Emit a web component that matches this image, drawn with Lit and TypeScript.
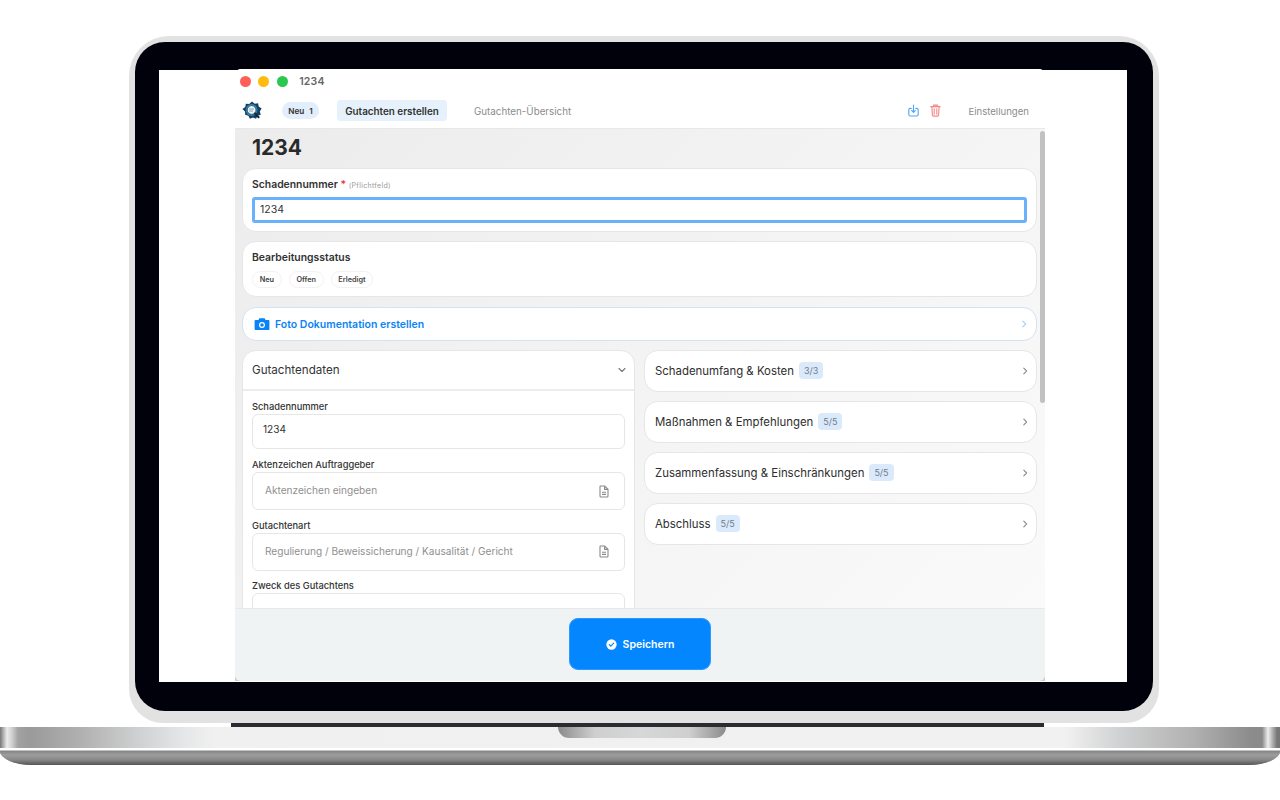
import { LitElement, html, css, svg } from "lit";
import { customElement } from "lit/decorators.js";

const docIcon = html`<svg class="doc" viewBox="0 0 12 13" width="12" height="13" fill="none" stroke="#8a8a8a" stroke-width="1.1"><path d="M2.5 1h4.2L10 4.3V11a1 1 0 0 1-1 1H3a1 1 0 0 1-1-1V1.6a.6.6 0 0 1 .5-.6z"/><path d="M6.6 1.2V4.4H9.8M4 7.3h4M4 9.4h4"/></svg>`;
const chev = html`<svg class="chev" viewBox="0 0 8 10" width="8" height="10" fill="none" stroke="#8a8a8a" stroke-width="1.1" stroke-linecap="round" stroke-linejoin="round"><path d="M2.8 2.2l2.8 2.8-2.8 2.8"/></svg>`;

@customElement("app-root")
export class AppRoot extends LitElement {
  static styles = css`
    :host { display: block; width: 1280px; height: 800px; overflow: hidden; background: #fff; font-family: Inter, "Liberation Sans", sans-serif; color: #2b2b2b; }
    * { box-sizing: border-box; }
    .device { width: 1030px; height: 687px; margin: 36px 0 0 129px; padding: 6px 6px 12px; background: #e2e2e2; border-radius: 40px 40px 34px 34px; }
    .bezel { height: 669px; background: #00010a; border-radius: 30px; padding: 28px 26px 29px 24px; }
    .screen { height: 612px; background: #fff; padding: 0 82px 0 76px; display: flex; flex-direction: column; }
    .win { height: 612px; flex: none; margin-top: -1px; background: linear-gradient(#fff 90%, #cfcfcf 90%); border-radius: 6px 6px 0 0; display: flex; flex-direction: column; overflow: hidden; position: relative; }
    .titlebar { height: 24px; flex: none; display: flex; align-items: center; padding-left: 5px; background: #fff; }
    .dot { width: 11px; height: 11px; border-radius: 50%; margin-right: 7.4px; }
    .wintitle { margin-left: 4px; font-size: 10.5px; font-weight: 600; color: #666; letter-spacing: .2px; }
    .nav { height: 36px; flex: none; display: flex; align-items: center; border-bottom: 1px solid #e8e8e8; padding-left: 7px; background: #fff; }
    .logo { width: 20px; height: 20px; margin-right: 20px; }
    .neu { height: 17px; width: 37px; border-radius: 9px; background: #e2eefb; font-size: 8.2px; font-weight: 600; color: #333; display: flex; align-items: center; justify-content: center; gap: 5px; margin-right: 18px; }
    .tab { height: 21px; width: 110px; background: #e6f1fb; border-radius: 4px; font-size: 9.9px; font-weight: 600; color: #333; display: flex; align-items: center; justify-content: center; margin-right: 27px; }
    .link { font-size: 9.8px; color: #8b8b8b; padding-top: 1px; }
    .actions { margin-left: auto; display: flex; align-items: center; }
    .actions svg { display: block; }
    .settings { font-size: 9.6px; color: #8b8b8b; margin: 0 16px 0 27px; padding-top: 1px; }
    .trash { margin-left: 11px; }
    .content { flex: 1; min-height: 0; overflow: hidden; position: relative; padding: 0 8px 0 7px; background: linear-gradient(135deg, #ececec 0%, #f2f2f2 40%, #fafafa 100%); }
    .thumb { position: absolute; right: 0; top: 2px; width: 5px; height: 272px; background: #c1c1c1; border-radius: 3px; }
    h1 { margin: 0; font-size: 21px; line-height: 25px; height: 39px; padding: 6px 0 0 10px; font-weight: 700; color: #2a2a2a; }
    .card { background: #fff; border: 1px solid #e6e6e6; border-radius: 14px; }
    .c1 { height: 64px; padding: 10px 9px; margin-bottom: 9px; }
    .req { font-size: 10.4px; font-weight: 600; color: #333; line-height: 12px; display: block; }
    .req i { color: #f0323c; font-style: normal; }
    .req small { font-size: 7px; font-weight: 400; color: #999; letter-spacing: .3px; }
    .focus { height: 26px; margin-top: 5px; border: 3px solid #6ab1fb; border-radius: 3px; font-size: 10.5px; color: #333; display: flex; align-items: center; padding: 0 0 2px 5px; }
    .c2 { height: 56px; padding: 9px 9px; margin-bottom: 10px; }
    .c2 b { font-size: 10.4px; font-weight: 600; color: #333; line-height: 13px; display: block; }
    .chips { display: flex; gap: 7px; margin-top: 7px; }
    .chip { height: 17px; padding: 0 6.7px; border-radius: 9px; border: 1px solid #f2f2f2; background: #fff; font-size: 7.3px; font-weight: 600; color: #444; display: flex; align-items: center; }
    .photo { height: 34px; border-color: #d3e1f1; display: flex; align-items: center; padding: 0 8px 0 11px; margin-bottom: 9px; color: #0a84f5; font-size: 10.5px; font-weight: 600; gap: 5px; }
    .photo .chev { margin-left: auto; }
    .cols { display: grid; grid-template-columns: 393px 393px; gap: 9px; align-items: start; }
    .panel { height: 400px; border-radius: 14px 14px 0 0; }
    .phead { height: 40px; display: flex; align-items: center; justify-content: space-between; padding: 0 7px 0 9px; font-size: 11.6px; color: #333; border-bottom: 2px solid #ececec; }
    .fields { padding: 10px 9px; }
    .lab { font-size: 9.3px; font-weight: 500; color: #333; line-height: 12px; display: block; margin-bottom: 1px; }
    .inp { border: 1px solid #e6e6e6; border-radius: 6px; background: #fff; display: flex; align-items: center; justify-content: space-between; font-size: 10.1px; padding: 0 14px 0 12px; color: #8f8f8f; }
    .inp span { padding-bottom: 2px; }
    .i1 { height: 35px; color: #333; padding-left: 10px; margin-bottom: 10px; }
    .i1 span { padding-bottom: 6px; }
    .i2 { height: 38px; margin-bottom: 9.5px; }
    .stack { display: flex; flex-direction: column; gap: 9px; }
    .row { height: 42px; display: flex; align-items: center; padding: 0 7px 1px 10px; font-size: 11.4px; color: #2e2e2e; }
    .row .chev { margin-left: auto; }
    .badge { margin-left: 5px; height: 17px; padding: 0 5px; border-radius: 4px; background: #dbeafa; font-size: 9px; color: #6b7d90; display: flex; align-items: center; }
    .footer { height: 73px; flex: none; background: #f0f3f4; border-top: 1px solid #e6e8ea; padding-bottom: 2px; border-radius: 0 0 6px 6px; display: flex; align-items: center; justify-content: center; }
    .save { width: 142px; height: 52px; background: #0486fe; border: 1px solid #2f97fd; border-radius: 9px; color: #fff; font-size: 10.5px; font-weight: 600; display: flex; align-items: center; justify-content: center; gap: 6px; }
    .line { width: 813px; height: 4px; background: #2b2c33; margin-left: 231px; }
    .base { position: relative; height: 38px; width: 1280px; border-radius: 0 0 32px 32px / 0 0 14px 14px; overflow: hidden; background: linear-gradient(90deg, #777 0, #aaa 3px, #ececec 7px, #cfcfcf 12px, #a2a2a2 18px, #9a9a9a 30px, #b0b0b0 80px, #d0d1d2 140px, #e6e7e8 185px, #f0f0f0 215px, #f1f1f1 1065px, #d0d1d2 1120px, #b0b0b0 1195px, #8c8c8c 1250px, #8a8a8a 1262px, #eee 1268px, #aaa 1273px, #777 1277px); }
    .lip { position: absolute; left: 0; right: 0; bottom: 0; height: 17px; background: linear-gradient(180deg, #fff 0, #fff 2px, #858585 3px, #9d9d9d 7px, #868686 12px, #555 17px); }
    .notch { position: absolute; left: 558px; top: 0; width: 168px; height: 11px; border-radius: 0 0 14px 14px; background: linear-gradient(90deg, #8b8b8b 0, #cfcfcf 22%, #d6d7d8 50%, #cfcfcf 78%, #8b8b8b 100%); }
  `;

  render() {
    const logo = svg`<path d="M10 .4l2.7 2.3 3.4-.4.6 3.3 2.9 2-1.8 2.9 1 3.2-3.3 1-1.4 3.1-3.1-1.2-3.1 1.2-1.5-3.1-3.2-1-.2-3.2L.4 8l2.9-2 .5-3.3 3.4.3z" fill="#153f60"/><circle cx="9.6" cy="9" r="5.9" fill="#2e86bb"/><circle cx="9.6" cy="9" r="4.4" fill="#eef3f6" stroke="#1a4763" stroke-width=".8"/><path d="M7 8h5M7 10h4" stroke="#7f9bad" stroke-width=".9"/><path d="M13 12.6l3.6 3.6" stroke="#10283c" stroke-width="2" stroke-linecap="round"/>`;
    return html`
      <div class="device"><div class="bezel"><div class="screen"><div class="win">
        <div class="titlebar">
          <span class="dot" style="background:#ff5f57"></span>
          <span class="dot" style="background:#febc0f"></span>
          <span class="dot" style="background:#2ac84f"></span>
          <span class="wintitle">1234</span>
        </div>
        <div class="nav">
          <svg class="logo" viewBox="0 0 20 20">${logo}</svg>
          <div class="neu"><span>Neu</span><span>1</span></div>
          <div class="tab">Gutachten erstellen</div>
          <div class="link">Gutachten-Übersicht</div>
          <div class="actions">
            <svg viewBox="0 0 11 13" width="11" height="13" fill="none" stroke="#55a5f7" stroke-width="1.1" stroke-linecap="round" stroke-linejoin="round"><path d="M3.2 4.4H2.2A1.4 1.4 0 0 0 .8 5.8v4.8A1.4 1.4 0 0 0 2.2 12h6.6a1.4 1.4 0 0 0 1.4-1.4V5.8a1.4 1.4 0 0 0-1.4-1.4h-1"/><path d="M5.5 1v7M3.6 6.4l1.9 1.9 1.9-1.9"/></svg>
            <svg class="trash" viewBox="0 0 11 13" width="11" height="13" fill="none" stroke="#f78585" stroke-width="1.1" stroke-linecap="round" stroke-linejoin="round"><path d="M.8 2.6h9.4M3.6 2.6V1.1h3.8v1.5M1.9 2.6l.5 8.6a1 1 0 0 0 1 .9h4.2a1 1 0 0 0 1-.9l.5-8.6M4.2 4.8v5.4M6.8 4.8v5.4"/></svg>
            <div class="settings">Einstellungen</div>
          </div>
        </div>
        <div class="content">
          <div class="thumb"></div>
          <h1>1234</h1>
          <div class="card c1">
            <span class="req">Schadennummer <i>*</i> <small>(Pflichtfeld)</small></span>
            <div class="focus">1234</div>
          </div>
          <div class="card c2">
            <b>Bearbeitungsstatus</b>
            <div class="chips"><div class="chip">Neu</div><div class="chip">Offen</div><div class="chip">Erledigt</div></div>
          </div>
          <div class="card photo">
            <svg viewBox="0 0 16 14" width="16" height="14"><path fill-rule="evenodd" fill="#0a84f5" d="M5.4 1.2h5.2l1 1.8h2.6A1 1 0 0 1 15.4 4v8a1 1 0 0 1-1.2 1H1.8A1 1 0 0 1 .6 12V4a1 1 0 0 1 1.2-1h2.6zM8 5a3 3 0 1 0 0 6 3 3 0 0 0 0-6z"/><circle cx="8" cy="8" r="1.8" fill="#0a84f5"/></svg>
            <span>Foto Dokumentation erstellen</span>
            <svg class="chev" viewBox="0 0 8 10" width="8" height="10" fill="none" stroke="#a9cdf3" stroke-width="1.1" stroke-linecap="round" stroke-linejoin="round"><path d="M2.8 2.2l2.8 2.8-2.8 2.8"/></svg>
          </div>
          <div class="cols">
            <div class="card panel">
              <div class="phead"><span>Gutachtendaten</span><svg viewBox="0 0 10 8" width="10" height="8" fill="none" stroke="#777" stroke-width="1.1" stroke-linecap="round" stroke-linejoin="round"><path d="M2 2.5l3 3 3-3"/></svg></div>
              <div class="fields">
                <span class="lab">Schadennummer</span>
                <div class="inp i1"><span>1234</span></div>
                <span class="lab">Aktenzeichen Auftraggeber</span>
                <div class="inp i2"><span>Aktenzeichen eingeben</span>${docIcon}</div>
                <span class="lab">Gutachtenart</span>
                <div class="inp i2"><span>Regulierung / Beweissicherung / Kausalität / Gericht</span>${docIcon}</div>
                <span class="lab">Zweck des Gutachtens</span>
                <div class="inp i2"></div>
              </div>
            </div>
            <div class="stack">
              <div class="card row"><span>Schadenumfang &amp; Kosten</span><span class="badge">3/3</span>${chev}</div>
              <div class="card row"><span>Maßnahmen &amp; Empfehlungen</span><span class="badge">5/5</span>${chev}</div>
              <div class="card row"><span>Zusammenfassung &amp; Einschränkungen</span><span class="badge">5/5</span>${chev}</div>
              <div class="card row"><span>Abschluss</span><span class="badge">5/5</span>${chev}</div>
            </div>
          </div>
        </div>
        <div class="footer">
          <div class="save">
            <svg viewBox="0 0 12 12" width="11" height="11"><circle cx="6" cy="6" r="5.6" fill="#fff"/><path d="M3.6 6.2l1.7 1.7 3.1-3.4" fill="none" stroke="#0486fe" stroke-width="1.2" stroke-linecap="round" stroke-linejoin="round"/></svg>
            <span>Speichern</span>
          </div>
        </div>
      </div></div></div></div>
      <div class="line"></div>
      <div class="base"><div class="notch"></div><div class="lip"></div></div>
    `;
  }
}
